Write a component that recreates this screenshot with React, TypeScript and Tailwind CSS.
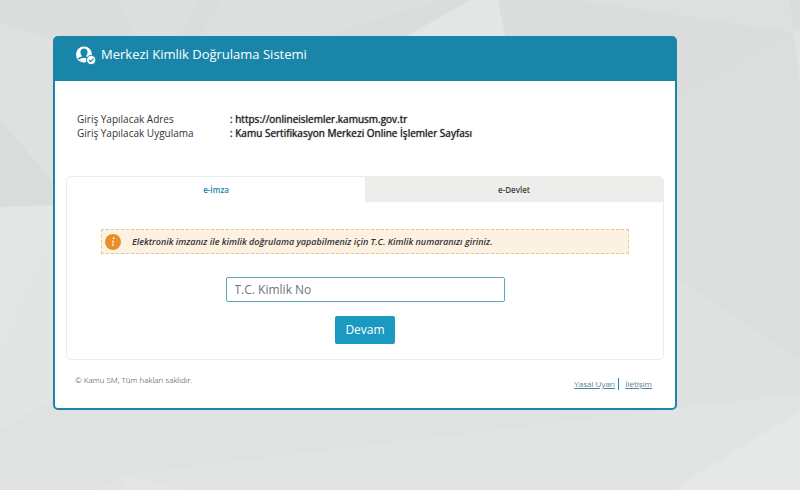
import { useState } from 'react';

const facets = [
  { points: '0,0 117,0 138,40 53,40 0,24', fill: '#dbdddc' },
  { points: '117,0 197,0 180,40 138,40', fill: '#dddfde' },
  { points: '197,0 222,0 198,40 180,40', fill: '#dbdddc' },
  { points: '222,0 468,0 320,40 198,40', fill: '#dddfde' },
  { points: '440,0 470,0 403,40 310,40', fill: '#dbdddc' },
  { points: '470,0 498,0 506,40 400,40', fill: '#e4e6e5' },
  { points: '498,0 800,0 800,32 677,96 677,40 506,40', fill: '#dbdddc' },
  { points: '575,0 790,0 793,32 677,15', fill: '#dee0df' },
  { points: '0,24 60,44 60,190 0,120', fill: '#dfe1e0' },
  { points: '0,120 60,190 60,205 0,207', fill: '#dadcdb' },
  { points: '0,207 60,205 60,220 0,350', fill: '#e4e6e5' },
  { points: '0,350 60,220 60,395 0,430', fill: '#e3e5e4' },
  { points: '677,96 793,32 800,80 800,360 677,278', fill: '#dcdedd' },
  { points: '793,32 800,30 800,80', fill: '#e1e3e2' },
  { points: '677,278 800,360 800,394 677,408', fill: '#dfe1e0' },
  { points: '800,394 800,490 100,490 123,475 677,408', fill: '#e2e4e3' },
  { points: '123,475 180,490 125,490', fill: '#e4e6e5' },
  { points: '800,411 800,490 672,490', fill: '#e6e8e7' },
];

const Backdrop = () => (
  <svg
    className="absolute inset-0 -z-10 h-full w-full"
    viewBox="0 0 800 490"
    preserveAspectRatio="xMidYMid slice"
    aria-hidden="true"
  >
    {facets.map((f) => (
      <polygon key={f.points} points={f.points} fill={f.fill} />
    ))}
  </svg>
);

const UserCheckIcon = () => (
  <svg className="h-5 w-5 flex-none" viewBox="0 0 20 20" aria-hidden="true">
    <circle cx="8" cy="8.500" r="8" fill="#fff" />
    <path
      d="M8 2.500c2.200 0 3.600 1.500 3.600 3.600 0 1.600-.6 2.800-1.400 3.500v.8c1.700.5 3 1 3.900 1.800A7.100 7.100 0 0 1 8 15.500a7.100 7.100 0 0 1-6.100-3.300c.9-.8 2.200-1.300 3.900-1.800v-.8c-.8-.7-1.400-1.900-1.400-3.500 0-2.100 1.400-3.600 3.600-3.600z"
      fill="#1986a9"
    />
    <path
      d="M8 3.700c1.600 0 2.500 1 2.500 2.600 0 1.500-.6 2.400-1.300 2.900v1.900c1.900.4 3.200 1 3.800 2L8 16l-5-2.900c.6-1 1.900-1.600 3.800-2V9.200c-.7-.5-1.300-1.400-1.300-2.900 0-1.600.9-2.600 2.500-2.600z"
      fill="#1986a9"
    />
    <path d="M3 13.500c1.300-1.200 3-1.600 5-1.600s3.700.4 5 1.600L8 16.500z" fill="#fff" />
    <circle cx="15.200" cy="14" r="4.700" fill="#fff" stroke="#1986a9" />
    <path d="m13 14 1.600 1.600 2.900-3" fill="none" stroke="#1986a9" strokeWidth="1.200" />
  </svg>
);

const InfoIcon = () => (
  <svg className="h-4 w-4 flex-none" viewBox="0 0 16 16" aria-hidden="true">
    <circle cx="8" cy="8" r="8" fill="#e6902c" />
    <circle cx="8.600" cy="4.300" r="1" fill="#fdf0dd" />
    <path d="M6.800 7h1.500l-.7 4.500H9" fill="none" stroke="#fdf0dd" />
  </svg>
);

const details = [
  { label: 'Giriş Yapılacak Adres', value: 'https://onlineislemler.kamusm.gov.tr' },
  { label: 'Giriş Yapılacak Uygulama', value: 'Kamu Sertifikasyon Merkezi Online İşlemler Sayfası' },
];

const tabs = ['e-İmza', 'e-Devlet'];

const App = () => {
  const [active, setActive] = useState(0);
  const [idNumber, setIdNumber] = useState('');

  return (
    <div lang="tr" className="relative isolate min-h-screen bg-[#e0e2e1] px-4 pt-9 pb-20 font-['Open_Sans',sans-serif] text-[#333] sm:pr-[123px] sm:pl-[53px]">
      <Backdrop />
      <main className="rounded-[5px] border-2 border-[#1986a9] bg-white">
        <header className="flex h-[43px] items-start gap-[5px] bg-[#1986a9] px-[21px] pt-2 text-white">
          <UserCheckIcon />
          <h1 className="text-[13px] leading-4">Merkezi Kimlik Doğrulama Sistemi</h1>
        </header>

        <dl className="px-[22px] pt-[31px] pb-9 text-[10px] leading-[14px]">
          {details.map((d) => (
            <div key={d.label} className="flex">
              <dt className="w-[153px] flex-none">{d.label}</dt>
              <dd className="text-[#222] [text-shadow:0_0_1px_#333]">: {d.value}</dd>
            </div>
          ))}
        </dl>

        <section className="mx-[11px] rounded-[5px] border border-[#ececeb]">
          <div role="tablist" className="grid grid-cols-2">
            {tabs.map((tab, i) => (
              <button
                key={tab}
                type="button"
                role="tab"
                aria-selected={active === i}
                onClick={() => setActive(i)}
                className={`h-[25px] text-[8px] font-semibold ${active === i ? 'text-[#1986a9]' : 'rounded-tr bg-[#ededeb] text-[#444]'}`}
              >
                {tab}
              </button>
            ))}
          </div>
          <form className="px-[34px] pt-[27px] pb-[15px]" onSubmit={(e) => e.preventDefault()}>
            <p className="flex h-[25px] items-center gap-[11px] border border-dashed border-[#e6c988] bg-[#fdf2e1] px-[3px] text-[9px] leading-[14px] font-semibold italic">
              <InfoIcon />
              Elektronik imzanız ile kimlik doğrulama yapabilmeniz için T.C. Kimlik numaranızı giriniz.
            </p>
            <div className="mt-[23px] flex flex-col items-center gap-[14px]">
              <input
                type="text"
                aria-label="T.C. Kimlik No"
                placeholder="T.C. Kimlik No"
                value={idNumber}
                onChange={(e) => setIdNumber(e.target.value)}
                className="h-[25px] w-[279px] max-w-full rounded-xs border border-[#5fa5bd] px-2 text-xs shadow-xs placeholder:text-[#6c757d]"
              />
              <button type="submit" className="h-7 rounded-xs bg-[#1a9ac0] px-[10px] text-xs text-white">
                Devam
              </button>
            </div>
          </form>
        </section>

        <footer className="flex justify-between px-5 pt-[14px] pb-[18px] text-[8px] leading-3">
          <p className="font-light">© Kamu SM, Tüm hakları saklıdır.</p>
          <nav className="flex pt-1 pr-[3px] text-[#4d8592]">
            <a href="#yasal" className="pr-[3px] underline">Yasal Uyarı</a>
            <a href="#iletisim" className="border-l border-[#1986a9] pl-[6px] underline">İletişim</a>
          </nav>
        </footer>
      </main>
    </div>
  );
};

export default App;
